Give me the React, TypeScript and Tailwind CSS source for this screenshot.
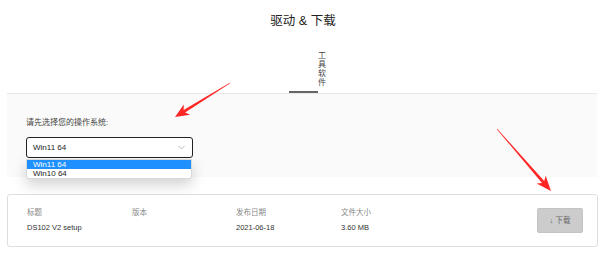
import React from "react";

function arrowPoints(tx: number, ty: number, px: number, py: number, headLen: number, headHalf: number, neckLen: number, tailHalf: number, neckHalf: number) {
  const dx = px - tx;
  const dy = py - ty;
  const L = Math.hypot(dx, dy);
  const ux = dx / L;
  const uy = dy / L;
  const nx = -uy;
  const ny = ux;
  const bx = px - headLen * ux;
  const by = py - headLen * uy;
  const kx = px - neckLen * ux;
  const ky = py - neckLen * uy;
  const pts = [
    [tx + tailHalf * nx, ty + tailHalf * ny],
    [kx + neckHalf * nx, ky + neckHalf * ny],
    [bx + headHalf * nx, by + headHalf * ny],
    [px, py],
    [bx - headHalf * nx, by - headHalf * ny],
    [kx - neckHalf * nx, ky - neckHalf * ny],
    [tx - tailHalf * nx, ty - tailHalf * ny],
  ];
  return pts.map((p) => `${p[0].toFixed(1)},${p[1].toFixed(1)}`).join(" ");
}

export default function App() {
  const font = { fontFamily: '"Liberation Sans", "Noto Sans CJK SC", Arial, sans-serif' };
  return (
    <div className="relative w-[600px] h-[276px] bg-white overflow-hidden text-[#333]" style={font}>
      <div className="pt-[14px] text-center text-[12.5px] leading-[14px] text-[#222] font-normal pl-[6px]">驱动 &amp; 下载</div>

      <div className="mt-[23px] flex pl-[289px] items-end h-[42px]">
        <div className="w-[29px] h-full border-b-2 border-[#666]" />
        <div className="w-[9px] self-start text-[8px] leading-[9px] text-[#444] break-all">工具软件</div>
      </div>

      <div className="ml-[7px] w-[590px] h-[84px] border-t border-[#e8e8e8] bg-[#fafafa] pl-[19px] pt-[23px]">
        <div className="text-[8px] leading-[12px] text-[#444]">请先选择您的操作系统:</div>
        <div className="relative mt-[8px] w-[167px]">
          <div className="h-[21px] border border-[#222] rounded-[3px] bg-white flex items-center justify-between pl-[6px] pr-[6px] text-[8px] text-[#222]">
            <span>Win11 64</span>
            <svg width="7" height="5" viewBox="0 0 7 5" className="mr-[1px]">
              <path d="M0.5 1 L3.5 4 L6.5 1" fill="none" stroke="#aaa" strokeWidth="0.8" />
            </svg>
          </div>
          <div className="absolute left-0 top-[22px] w-[166px] bg-white border border-[#d8d8d8] rounded-b-[3px] shadow-[0_6px_14px_rgba(0,0,0,0.18)] text-[8px] leading-[9px] overflow-hidden">
            <div className="bg-[#1e90ff] text-white pl-[6px] h-[9px]">Win11 64</div>
            <div className="text-[#222] pl-[6px] h-[9px]">Win10 64</div>
          </div>
        </div>
      </div>

      <div className="mt-[17px] ml-[7px] w-[591px] h-[53px] border border-[#dedede] rounded-[3px] bg-white flex items-center justify-between pl-[19px] pr-[14px]">
        <div className="grid grid-cols-[105px_104px_105px_80px] gap-y-[3px] text-[7.5px] leading-[12px]">
          <div className="text-[#888]">标题</div>
          <div className="text-[#888]">版本</div>
          <div className="text-[#888]">发布日期</div>
          <div className="text-[#888]">文件大小</div>
          <div className="text-[#333]">DS102 V2 setup</div>
          <div />
          <div className="text-[#333]">2021-06-18</div>
          <div className="text-[#333]">3.60 MB</div>
        </div>
        <div className="w-[46px] h-[25px] bg-[#cccccc] rounded-[2px] border border-[#c4c4c4] flex items-center justify-center text-[7.5px] text-[#666]">
          ↓ 下载
        </div>
      </div>

      <svg className="absolute left-0 top-0 pointer-events-none" width="600" height="276">
        <polygon points={arrowPoints(230, 83, 175, 117, 14, 6, 11, 0.3, 1.4)} fill="#ff2626" />
        <polygon points={arrowPoints(497, 129, 551, 191, 15, 6, 12, 0.3, 1.5)} fill="#ff2626" />
      </svg>
    </div>
  );
}
